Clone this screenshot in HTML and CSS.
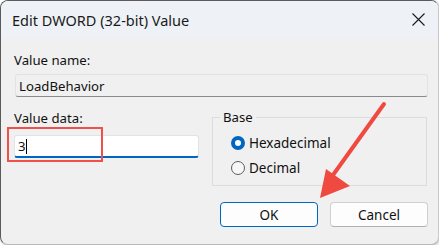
FILE: index.html
```html
<!DOCTYPE html>
<html>
<head>
    <title>Edit DWORD (32-bit) Value</title>
    <link rel="stylesheet" href="styles.css">
</head>
<body>
    <div class="window">
        <div class="titlebar">
            <span class="title">Edit DWORD (32-bit) Value</span>
            <svg class="close" width="13" height="13" viewBox="0 0 13 13">
                <path d="M0.5 0.5 L12.5 12.5 M12.5 0.5 L0.5 12.5" stroke="#1a1a1a" stroke-width="1.1" fill="none"/>
            </svg>
        </div>

        <div class="content">
            <div class="label">Value name:</div>
            <div class="textbox readonly">LoadBehavior</div>

            <div class="row">
                <div class="data-col">
                    <div class="label">Value data:</div>
                    <div class="textbox active"><span class="value">3</span><span class="caret"></span></div>
                </div>

                <div class="groupbox">
                    <div class="legend">Base</div>
                    <div class="radio checked"><span class="dot"></span>Hexadecimal</div>
                    <div class="radio"><span class="dot"></span>Decimal</div>
                </div>
            </div>

            <div class="buttons">
                <button class="btn primary">OK</button>
                <button class="btn">Cancel</button>
            </div>
        </div>

        <!-- annotations -->
        <div class="highlight"></div>
        <svg class="arrow" width="439" height="247" viewBox="0 0 439 247">
            <line x1="384" y1="104" x2="333" y2="175" stroke="#f04a40" stroke-width="4" stroke-linecap="round"/>
            <polygon points="320,198 326,169 350,186" fill="#f04a40"/>
        </svg>
    </div>
</body>
</html>
```

FILE: styles.css
```css
body {
    margin: 0;
    background: #fff;
    font-family: "Noto Sans", Arial, sans-serif;
    color: #111;
}

.window {
    position: relative;
    width: 437px;
    height: 243px;
    border-top: 1px solid #5a5a5a;
    border-left: 1px solid #5a5a5a;
    border-right: 1px solid #c8c8c8;
    border-bottom: 1px solid #b8b8b8;
    border-radius: 8px;
    background: #f0f0f0;
    overflow: hidden;
    box-shadow: 1px 1px 3px rgba(0,0,0,0.25);
}

.titlebar {
    height: 37px;
    background: #eef2f7;
    display: flex;
    align-items: center;
    justify-content: space-between;
    padding: 0 13px 0 11px;
}

.title {
    font-size: 14.5px;
    color: #1a1a1a;
}

.close {
    display: block;
}

.content {
    padding: 13px 10px 0 13px;
    font-size: 13.2px;
}

.label {
    height: 18px;
    line-height: 18px;
    margin-bottom: 5px;
}

.textbox {
    height: 23px;
    line-height: 22px;
    box-sizing: border-box;
    padding-left: 3px;
    border: 1px solid #e3e3e3;
    border-radius: 3px;
}

.textbox.readonly {
    margin-left: 1px;
    background: #f0f0f0;
    border-color: #e2e2e2;
    border-bottom-color: #8a8a8a;
}

.textbox.active {
    display: flex;
    align-items: center;
    background: #fff;
    border-bottom: 2px solid #0067c0;
}

.caret {
    width: 1px;
    height: 15px;
    background: #000;
}

.row {
    display: grid;
    grid-template-columns: 185px 215px;
    gap: 13px;
    margin-top: 12px;
}

.data-col .label {
    margin-bottom: 8px;
}

.groupbox {
    position: relative;
    margin-top: 8px;
    height: 69px;
    box-sizing: border-box;
    border: 1px solid #dcdcdc;
    padding: 12px 0 0 20px;
}

.legend {
    position: absolute;
    top: -10px;
    left: 7px;
    padding: 0 3px;
    background: #f0f0f0;
    line-height: 18px;
}

.radio {
    display: flex;
    align-items: center;
    height: 25px;
    margin-left: -2px;
    font-size: 13.5px;
}

.dot {
    width: 12px;
    height: 12px;
    border: 1px solid #5c5c5c;
    border-radius: 50%;
    background: #f7f7f7;
    margin-right: 4px;
    box-sizing: content-box;
}

.radio.checked .dot {
    width: 6px;
    height: 6px;
    border: 4px solid #0067c0;
    background: #fff;
}

.buttons {
    display: flex;
    justify-content: flex-end;
    gap: 12px;
    margin-top: 16px;
}

.btn {
    width: 98px;
    height: 25px;
    font-family: "Noto Sans", Arial, sans-serif;
    font-size: 13.5px;
    color: #111;
    background: #fdfdfd;
    border: 1px solid #d0d0d0;
    border-bottom-color: #b0b0b0;
    border-radius: 4px;
    padding: 0;
}

.btn.primary {
    border: 1px solid #0067c0;
}

.highlight {
    position: absolute;
    left: 6px;
    top: 126px;
    width: 92px;
    height: 31px;
    border: 2px solid #f0504a;
}

.arrow {
    position: absolute;
    left: -1px;
    top: -1px;
    pointer-events: none;
}
```
